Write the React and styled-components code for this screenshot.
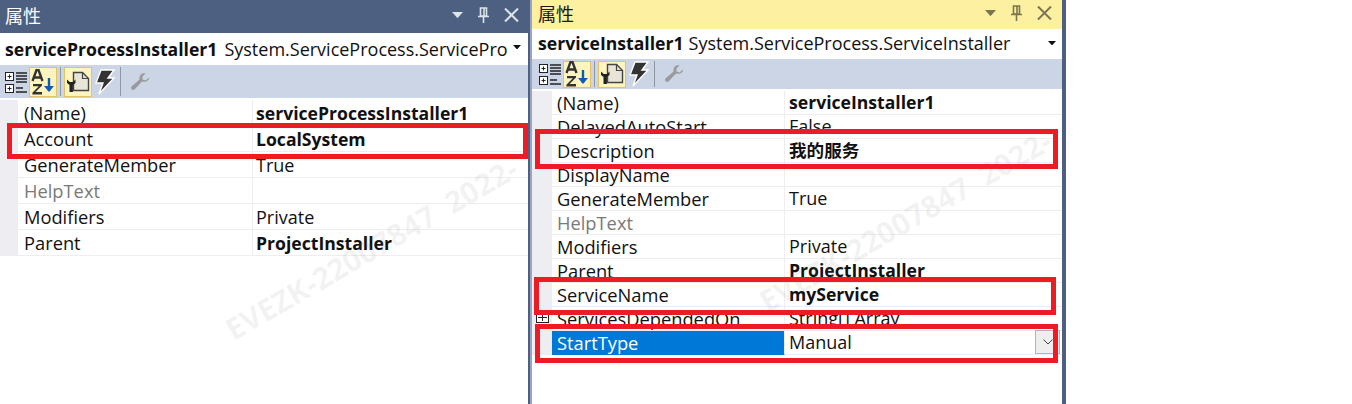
import React from 'react';
import styled, { createGlobalStyle } from 'styled-components';

const GlobalStyle = createGlobalStyle`
    html, body { margin: 0; padding: 0; background: #fff; }
    body { font-family: "Open Sans", "Noto Sans", "Noto Sans CJK SC", sans-serif; }
`;

const leftRows = [
    { name: '(Name)', value: 'serviceProcessInstaller1', bold: true },
    { name: 'Account', value: 'LocalSystem', bold: true },
    { name: 'GenerateMember', value: 'True' },
    { name: 'HelpText', value: '', muted: true },
    { name: 'Modifiers', value: 'Private' },
    { name: 'Parent', value: 'ProjectInstaller', bold: true },
];

const rightRows = [
    { name: '(Name)', value: 'serviceInstaller1', bold: true },
    { name: 'DelayedAutoStart', value: 'False' },
    { name: 'Description', value: '我的服务', bold: true },
    { name: 'DisplayName', value: '' },
    { name: 'GenerateMember', value: 'True' },
    { name: 'HelpText', value: '', muted: true },
    { name: 'Modifiers', value: 'Private' },
    { name: 'Parent', value: 'ProjectInstaller', bold: true },
    { name: 'ServiceName', value: 'myService', bold: true },
    { name: 'ServicesDependedOn', value: 'String[] Array', expand: true },
    { name: 'StartType', value: 'Manual', selected: true },
];

const CategorizedIcon = () => (
    <svg width="24" height="24" viewBox="0 0 24 24">
        <rect x="0.5" y="2.500" width="8" height="8" fill="#fff" stroke="#222" />
        <path d="M2.500 6.500h4M4.500 4.500v4" stroke="#222" />
        <rect x="0.5" y="14.500" width="8" height="8" fill="#fff" stroke="#222" />
        <path d="M2.500 18.500h4M4.500 16.500v4" stroke="#222" />
        <path d="M11 3h11M11 6h11M11 9h11M11 12h11M11 18h7M11 22h11" stroke="#222" strokeWidth="1.600" />
    </svg>
);

const AlphaIcon = () => (
    <svg width="24" height="26" viewBox="0 0 24 26">
        <path d="M1.500 12 5.500 1h2l4 11M3.400 8.500h6.200" fill="none" stroke="#333" strokeWidth="2.400" />
        <path d="M2 15h9v1.600L4.600 23H11v2.400H1.400v-1.700L7.800 17.300H2z" fill="#333" />
        <path d="M18 9v13" stroke="#0a5db8" strokeWidth="2.400" />
        <path d="M13 17l5 6 5-6z" fill="#0a5db8" />
    </svg>
);

const PagesIcon = () => (
    <svg width="24" height="24" viewBox="0 0 24 24">
        <path d="M7.500 2.500h9l6 6v12h-15z" fill="#e8e4d8" stroke="#444" strokeWidth="1.400" />
        <path d="M16.500 2.500v6h6" fill="none" stroke="#444" strokeWidth="1.200" />
        <path d="M1 9.500v3.500l2.500 2v7h3.400v-7l2.600-2V9.500L7 12H3.800z" fill="#222" />
    </svg>
);

const BoltIcon = () => (
    <svg width="22" height="26" viewBox="0 0 22 26">
        <path d="M7 1h13l-6 8h6L5 25l4-11H2z" fill="#333" stroke="#fff" strokeWidth="1.400" />
    </svg>
);

const WrenchIcon = () => (
    <svg width="20" height="20" viewBox="0 0 20 20">
        <path d="M19 5.500l-3.500 3-3-1V4.500L15.500 1.500C12 .5 9 3 9.500 7.500L1.500 14.500c-1.500 2 1 4.500 3 3l7.500-8c4 1 7.500-1 7-4z" fill="#9a9a9a" />
    </svg>
);

const CaretDown = ({ size = 11, color = '#fff' }) => (
    <svg width={size} height={size * 0.56} viewBox="0 0 16 9">
        <path d="M0 0h16L8 9z" fill={color} />
    </svg>
);

const PinIcon = ({ color }) => (
    <svg width="11" height="16" viewBox="0 0 11 16">
        <path d="M2.500 1h6v8h-6zM6 1.500v7M0 9.500h11M5.500 10v6" fill="none" stroke={color} strokeWidth="1.600" />
    </svg>
);

const CloseIcon = ({ color }) => (
    <svg width="15" height="14" viewBox="0 0 15 14">
        <path d="M1 .5l13 13M14 .5 1 13.500" stroke={color} strokeWidth="2" />
    </svg>
);

const ChevronDown = () => (
    <svg width="10" height="6" viewBox="0 0 10 6">
        <path d="M.5.500 5 5 9.500.500" fill="none" stroke="#444" />
    </svg>
);

const PropertyPanel = ({ title, object, type, rows, compact, active, markLeft, markTop }) => {
    const iconColor = active ? '#7a7450' : '#dfe3ea';
    return (
        <Panel $compact={compact}>
            <TitleBar $active={active} $compact={compact}>
                <TitleText $active={active}>{title}</TitleText>
                <TitleIcons>
                    <CaretDown color={iconColor} />
                    <PinIcon color={iconColor} />
                    <CloseIcon color={iconColor} />
                </TitleIcons>
            </TitleBar>
            <ObjectRow $compact={compact}>
                <ObjectName $compact={compact}>{object}</ObjectName>
                <ObjectType>{type}</ObjectType>
                <ObjectCaret $compact={compact}><CaretDown size={8} color="#111" /></ObjectCaret>
            </ObjectRow>
            <Toolbar $compact={compact}>
                <PlainTool $w={25}><CategorizedIcon /></PlainTool>
                <ToggleTool $compact={compact}><AlphaIcon /></ToggleTool>
                <ToolSep $compact={compact} />
                <ToggleTool $compact={compact}><PagesIcon /></ToggleTool>
                <PlainTool $w={25}><BoltIcon /></PlainTool>
                <ToolSep $compact={compact} />
                <PlainTool $w={32}><WrenchIcon /></PlainTool>
            </Toolbar>
            <Grid $compact={compact}>
                {rows.map((row) => (
                    <Row key={row.name} $compact={compact}>
                        <Gutter $compact={compact}>{row.expand && <Expander />}</Gutter>
                        <NameCell $muted={row.muted} $selected={row.selected} $compact={compact}>
                            {row.name}
                        </NameCell>
                        <ValueCell $bold={row.bold} $compact={compact}>
                            {row.value}
                            {row.selected && <ComboButton><ChevronDown /></ComboButton>}
                        </ValueCell>
                    </Row>
                ))}
            </Grid>
            <Watermark $left={markLeft} $top={markTop}>EVEZK-22007847&nbsp;&nbsp;2022-</Watermark>
        </Panel>
    );
};

const App = () => (
    <Page>
        <GlobalStyle />
        <PropertyPanel
            title="属性"
            object="serviceProcessInstaller1"
            type="System.ServiceProcess.ServicePro"
            rows={leftRows}
            markLeft={238}
            markTop={308}
        />
        <Divider />
        <PropertyPanel
            compact
            active
            title="属性"
            object="serviceInstaller1"
            type="System.ServiceProcess.ServiceInstaller"
            rows={rightRows}
            markLeft={242}
            markTop={280}
        />
        <RightEdge />
        <Highlight $left={7} $top={123} $w={521} $h={36} />
        <Highlight $left={535} $top={129} $w={523} $h={40} />
        <Highlight $left={534} $top={277} $w={522} $h={38} />
        <Highlight $left={535} $top={324} $w={523} $h={39} />
    </Page>
);

const Page = styled.div`
    position: relative;
    display: flex;
    width: 1352px;
    height: 404px;
    overflow: hidden;
    background: #fff;
`;

const Panel = styled.div`
    position: relative;
    overflow: hidden;
    width: ${(p) => (p.$compact ? '532px' : '528px')};
    display: flex;
    flex-direction: column;
`;

const Divider = styled.div`
    width: 2px;
    background: #4d6082;
    box-shadow: 2px 0 0 #9aa5c4;
    position: relative;
    z-index: 1;
`;

const RightEdge = styled.div`
    width: 4px;
    background: #4d6082;
`;

const TitleBar = styled.div`
    display: flex;
    align-items: center;
    justify-content: space-between;
    box-sizing: border-box;
    height: ${(p) => (p.$compact ? '29px' : '33px')};
    margin-left: ${(p) => (p.$compact ? '2px' : '0')};
    padding: 0 ${(p) => (p.$compact ? '10px' : '9px')} 0 ${(p) => (p.$compact ? '6px' : '5px')};
    background: ${(p) => (p.$active ? '#fdf0a0' : '#4d6082')};
`;

const TitleText = styled.span`
    font-family: "Noto Sans CJK SC", sans-serif;
    font-size: 18px;
    line-height: 22px;
    margin-bottom: 4px;
    color: ${(p) => (p.$active ? '#1a1a1a' : '#fff')};
`;

const TitleIcons = styled.div`
    display: flex;
    align-items: center;
    gap: 15px;
    margin-bottom: 3px;
`;

const ObjectRow = styled.div`
    position: relative;
    display: flex;
    align-items: center;
    box-sizing: border-box;
    height: ${(p) => (p.$compact ? '30px' : '32px')};
    margin-left: ${(p) => (p.$compact ? '2px' : '0')};
    padding-left: ${(p) => (p.$compact ? '6px' : '5px')};
    padding-bottom: ${(p) => (p.$compact ? '2px' : '1px')};
    color: #111;
    white-space: nowrap;
`;

const ObjectName = styled.span`
    font-size: 17.6px;
    font-weight: 700;
    margin-right: ${(p) => (p.$compact ? '5px' : '7px')};
`;

const ObjectType = styled.span`
    font-size: 18px;
`;

const ObjectCaret = styled.span`
    position: absolute;
    right: ${(p) => (p.$compact ? '6px' : '7px')};
    top: 12px;
    display: flex;
`;

const Toolbar = styled.div`
    display: flex;
    align-items: center;
    height: ${(p) => (p.$compact ? '30px' : '33px')};
    margin-left: ${(p) => (p.$compact ? '2px' : '0')};
    padding-left: ${(p) => (p.$compact ? '6px' : '4px')};
    background: #ccd5e5;
`;

const PlainTool = styled.div`
    width: ${(p) => p.$w}px;
    display: flex;
    align-items: center;
    justify-content: center;
    flex-shrink: 0;
`;

const ToggleTool = styled.div`
    width: 28px;
    height: ${(p) => (p.$compact ? '27px' : '30px')};
    box-sizing: border-box;
    display: flex;
    align-items: center;
    justify-content: center;
    background: #fdf4bf;
    border: 1px solid #e5c365;
    flex-shrink: 0;
`;

const ToolSep = styled.div`
    width: 1px;
    height: ${(p) => (p.$compact ? '26px' : '29px')};
    margin: 0 3px;
    background: #8f96a4;
    flex-shrink: 0;
`;

const Grid = styled.div`
    margin-top: 2px;
    margin-left: ${(p) => (p.$compact ? '2px' : '0')};
`;

const Row = styled.div`
    display: flex;
    height: ${(p) => (p.$compact ? '24px' : '26px')};
    font-size: 18.3px;
    line-height: ${(p) => (p.$compact ? '23px' : '25px')};
    color: #111;
    white-space: nowrap;
`;

const Gutter = styled.div`
    position: relative;
    width: ${(p) => (p.$compact ? '20px' : '18px')};
    flex-shrink: 0;
    background: #eeeef2;
`;

const Expander = styled.span`
    position: absolute;
    left: 4px;
    top: 5px;
    width: 13px;
    height: 11px;
    box-sizing: border-box;
    border: 1px solid #222;
    background: linear-gradient(#222, #222) center / 9px 1px no-repeat, linear-gradient(#222, #222) center / 1px 7px no-repeat, #fff;
`;

const NameCell = styled.div`
    width: ${(p) => (p.$compact ? '233px' : '235px')};
    flex-shrink: 0;
    box-sizing: border-box;
    padding-left: ${(p) => (p.$compact ? '5px' : '6px')};
    border-right: 1px solid #eeeef2;
    border-bottom: 1px solid ${(p) => (p.$selected ? '#0078d7' : '#eeeef2')};
    color: ${(p) => (p.$selected ? '#fff' : p.$muted ? '#7a7a7a' : '#111')};
    background: ${(p) => (p.$selected ? '#0078d7' : 'transparent')};
`;

const ValueCell = styled.div`
    flex: 1;
    position: relative;
    padding-left: ${(p) => (p.$compact ? '4px' : '3px')};
    border-bottom: 1px solid #eeeef2;
    font-size: ${(p) => (p.$bold ? '17.6px' : '18px')};
    font-weight: ${(p) => (p.$bold ? 700 : 400)};
    line-height: ${(p) => (p.$compact ? '23px' : '26px')};
`;

const ComboButton = styled.div`
    position: absolute;
    right: 2px;
    top: -1px;
    width: 25px;
    height: 24px;
    box-sizing: border-box;
    display: flex;
    align-items: center;
    justify-content: center;
    background: #eeeeee;
    border: 1px solid #b4b4b4;
`;

const Highlight = styled.div`
    position: absolute;
    left: ${(p) => p.$left}px;
    top: ${(p) => p.$top}px;
    width: ${(p) => p.$w}px;
    height: ${(p) => p.$h}px;
    box-sizing: border-box;
    border: 5px solid #ed1c24;
`;

const Watermark = styled.div`
    position: absolute;
    left: ${(p) => p.$left}px;
    top: ${(p) => p.$top}px;
    font-size: 30px;
    font-weight: 700;
    color: rgba(120, 120, 120, 0.09);
    white-space: nowrap;
    transform: rotate(-30deg);
    transform-origin: left bottom;
    pointer-events: none;
`;

export default App;
